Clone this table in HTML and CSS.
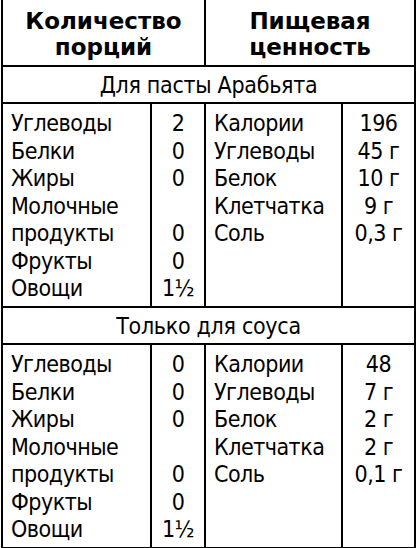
FILE: index.html
```html
<!DOCTYPE html>
<html lang="ru">
<head>
<meta charset="utf-8">
<title>Пищевая ценность</title>
<link rel="stylesheet" href="styles.css">
</head>
<body>
<div class="chart">
  <div class="row head">
    <div class="hcell span2">Количество<br>порций</div>
    <div class="hcell span2 sep">Пищевая<br>ценность</div>
  </div>
  <div class="row sub"><div class="scell">Для пасты Арабьята</div></div>
  <div class="row body">
    <div class="cell lab">Углеводы<br>Белки<br>Жиры<br>Молочные<br>продукты<br>Фрукты<br>Овощи</div>
    <div class="cell val sep">2<br>0<br>0<br>&nbsp;<br>0<br>0<br>1½</div>
    <div class="cell lab sep">Калории<br>Углеводы<br>Белок<br>Клетчатка<br>Соль</div>
    <div class="cell val sep">196<br>45 г<br>10 г<br>9 г<br>0,3 г</div>
  </div>
  <div class="row sub"><div class="scell">Только для соуса</div></div>
  <div class="row body last">
    <div class="cell lab">Углеводы<br>Белки<br>Жиры<br>Молочные<br>продукты<br>Фрукты<br>Овощи</div>
    <div class="cell val sep">0<br>0<br>0<br>&nbsp;<br>0<br>0<br>1½</div>
    <div class="cell lab sep">Калории<br>Углеводы<br>Белок<br>Клетчатка<br>Соль</div>
    <div class="cell val sep">48<br>7 г<br>2 г<br>2 г<br>0,1 г</div>
  </div>
</div>
</body>
</html>
```
FILE: styles.css
```css
html, body {
  margin: 0;
  padding: 0;
  background: #fff;
}
body {
  width: 416px;
  height: 548px;
  overflow: hidden;
  color: #000;
  font-family: "DejaVu Sans Condensed", "DejaVu Sans", sans-serif;
}
.chart {
  margin-left: 1px;
  width: 415px;
  box-sizing: border-box;
  border-left: 2px solid #000;
  border-right: 2px solid #000;
  border-bottom: 2px solid #000;
}
.row {
  display: grid;
  grid-template-columns: 147px 54px 137px 73px;
}
.row + .row {
  border-top: 2px solid #000;
}
.span2 {
  grid-column: span 2;
}
.sep {
  border-left: 2px solid #000;
}
.head {
  height: 65px;
}
.hcell {
  box-sizing: border-box;
  padding-top: 8px;
  text-align: center;
  font-family: "DejaVu Sans", sans-serif;
  font-weight: bold;
  font-size: 23px;
  line-height: 26px;
}
.sub {
  height: 35px;
}
.scell {
  grid-column: 1 / -1;
  display: flex;
  align-items: center;
  justify-content: center;
  font-size: 23px;
  line-height: 26px;
  letter-spacing: -0.3px;
}
.body {
  height: 202px;
}
.cell {
  box-sizing: border-box;
  padding-top: 6px;
  font-size: 23px;
  line-height: 27.5px;
  letter-spacing: -0.5px;
  white-space: nowrap;
}
.lab {
  padding-left: 8px;
}
.val {
  text-align: center;
}
```
